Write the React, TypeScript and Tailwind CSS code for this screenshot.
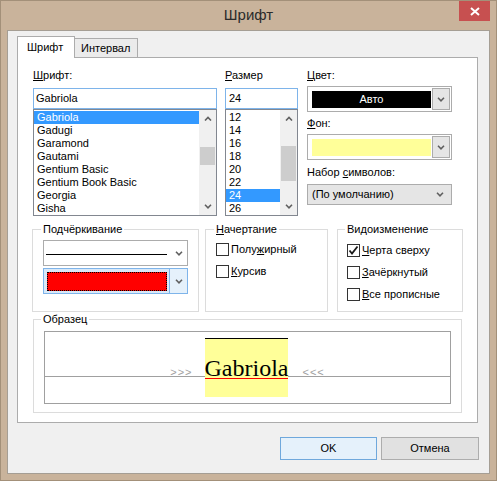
import React from "react";

const fonts = ["Gabriola", "Gadugi", "Garamond", "Gautami", "Gentium Basic", "Gentium Book Basic", "Georgia", "Gisha"];
const sizes = ["12", "14", "16", "18", "20", "22", "24", "26"];

const Chevron = ({ up = false }: { up?: boolean }) => (
  <svg width="8" height="5" viewBox="0 0 8 5">
    <polyline
      points={up ? "1,4.5 4,1.5 7,4.5" : "1,0.8 4,3.8 7,0.8"}
      fill="none"
      stroke="#606060"
      strokeWidth="1.6"
    />
  </svg>
);

const Scrollbar = ({ thumbTop, thumbHeight }: { thumbTop: string; thumbHeight: string }) => (
  <div className="flex w-[17px] flex-col bg-[#f0f0f0]">
    <div className="flex h-[17px] items-center justify-center">
      <Chevron up />
    </div>
    <div className="flex-1">
      <div className={`mx-px bg-[#cdcdcd] ${thumbTop} ${thumbHeight}`} />
    </div>
    <div className="flex h-[17px] items-center justify-center">
      <Chevron />
    </div>
  </div>
);

const Check = ({ label, checked = false }: { label: React.ReactNode; checked?: boolean }) => (
  <div className="flex h-[13px] items-center gap-[2px]">
    <div className="flex h-[13px] w-[13px] items-center justify-center border border-[#333] bg-white">
      {checked && (
        <svg width="11" height="11" viewBox="0 0 11 11">
          <path d="M1.5 5.5 L4 8.5 L9.5 1.5" fill="none" stroke="#1a1a1a" strokeWidth="1.8" />
        </svg>
      )}
    </div>
    <span className="leading-[13px]">{label}</span>
  </div>
);

const U = ({ children }: { children: React.ReactNode }) => <span className="underline">{children}</span>;

const ColorCombo = ({ swatch, children }: { swatch: string; children?: React.ReactNode }) => (
  <div className="flex h-[26px] items-center border border-[#acacac] bg-white pl-[4px] pr-px">
    <div className={`flex h-[17px] w-[119px] items-center justify-center text-white ${swatch}`}>{children}</div>
    <div className="ml-auto flex h-[22px] w-[18px] items-center justify-center border border-[#acacac] bg-[#e5e5e5]">
      <Chevron />
    </div>
  </div>
);

export default function App() {
  return (
    <div className="flex h-[481px] w-[497px] flex-col border border-[#a39079] bg-[#c9b39b] font-['Liberation_Sans',Arial,sans-serif] text-[11px] text-black">
      <div className="relative flex h-[29px] items-center justify-center text-[15px] text-[#2b2b2b]">
        Шрифт
        <div className="absolute right-[6px] top-0 flex h-[20px] w-[31px] items-center justify-center bg-[#c75050]">
          <svg width="10" height="9" viewBox="0 0 10 9">
            <path d="M1 1 L9 8 M9 1 L1 8" stroke="white" strokeWidth="2" />
          </svg>
        </div>
      </div>

      <div className="mx-[6px] mb-[6px] flex flex-1 flex-col border border-[#a59e94] bg-[#f0f0f0] px-[9px] pt-[5px]">
        <div className="flex h-[21px] items-end">
          <div className="relative z-10 -mb-px flex h-[22px] w-[58px] items-center border border-b-0 border-[#acacac] bg-white pl-[9px]">
            Шрифт
          </div>
          <div className="-ml-px flex h-[19px] w-[64px] items-center border border-b-0 border-[#acacac] bg-[#ebebeb] pl-[6px]">
            Интервал
          </div>
        </div>

        <div className="h-[366px] w-[461px] border border-[#acacac] bg-white pl-[15px] pt-[10px]">
          <div className="flex items-start">
            <div className="flex w-[184px] flex-col">
              <div className="h-[15px] leading-[15px]">
                <U>Ш</U>рифт:
              </div>
              <div className="mt-[5px] flex h-[21px] items-center border border-[#7eb4ea] pl-[2px]">Gabriola</div>
              <div className="flex h-[107px] border border-[#828790]">
                <div className="flex-1 pt-px">
                  {fonts.map((f, i) => (
                    <div
                      key={f}
                      className={`h-[13px] pl-[3px] leading-[13px] ${i === 0 ? "bg-[#3399ff] text-white" : ""}`}
                    >
                      {f}
                    </div>
                  ))}
                </div>
                <Scrollbar thumbTop="mt-[20px]" thumbHeight="h-[18px]" />
              </div>
            </div>

            <div className="ml-[8px] flex w-[73px] flex-col">
              <div className="h-[15px] leading-[15px]">
                <U>Р</U>азмер
              </div>
              <div className="mt-[5px] flex h-[21px] items-center border border-[#7eb4ea] pl-[3px]">24</div>
              <div className="flex h-[107px] border border-[#828790]">
                <div className="flex-1 pt-px">
                  {sizes.map((s) => (
                    <div
                      key={s}
                      className={`h-[13px] pl-[3px] leading-[13px] ${s === "24" ? "bg-[#3399ff] text-white" : ""}`}
                    >
                      {s}
                    </div>
                  ))}
                </div>
                <Scrollbar thumbTop="mt-[19px]" thumbHeight="h-[35px]" />
              </div>
            </div>

            <div className="ml-[9px] flex w-[145px] flex-col">
              <div className="h-[15px] leading-[15px]">
                <U>Ц</U>вет:
              </div>
              <div className="mt-[3px]">
                <ColorCombo swatch="bg-black">Авто</ColorCombo>
              </div>
              <div className="mt-[4px] h-[15px] leading-[15px]">
                <U>Ф</U>он:
              </div>
              <div className="mt-[3px]">
                <ColorCombo swatch="bg-[#ffff99]" />
              </div>
              <div className="mt-[5px] h-[15px] leading-[15px]">
                Набор <U>с</U>имволов:
              </div>
              <div className="mt-[4px] flex h-[21px] items-center justify-between border border-[#acacac] bg-[#e5e5e5] pl-[4px] pr-[7px]">
                <span>(По умолчанию)</span>
                <Chevron />
              </div>
            </div>
          </div>

          <div className="-ml-px mt-[6px] flex items-start">
            <fieldset className="h-[90px] w-[167px] border border-[#dcdcdc]">
              <legend className="ml-[8px] px-[2px] leading-[15px]">Подчёркивание</legend>
              <div className="ml-[10px] mt-[3px] w-[145px]">
                <div className="flex h-[26px] items-center border border-[#acacac] bg-white pl-[2px] pr-[4px]">
                  <div className="mt-[2px] h-px w-[121px] bg-black" />
                  <div className="ml-auto">
                    <Chevron />
                  </div>
                </div>
                <div className="mt-[2px] flex h-[26px] items-center border border-[#7eb4ea] bg-[#d9e8f8] pl-[3px]">
                  <div className="h-[19px] w-[120px] border border-dotted border-black bg-[#ff0000]" />
                  <div className="ml-auto flex h-[24px] w-[18px] items-center justify-center border-l border-[#7eb4ea] bg-[#e5f1fb]">
                    <Chevron />
                  </div>
                </div>
              </div>
            </fieldset>

            <fieldset className="ml-[6px] h-[90px] w-[123px] border border-[#dcdcdc]">
              <legend className="ml-[8px] px-[2px] leading-[15px]">
                <U>Н</U>ачертание
              </legend>
              <div className="mt-[6px] flex flex-col gap-[9px] pl-[10px]">
                <Check
                  label={
                    <>
                      Полу<U>ж</U>ирный
                    </>
                  }
                />
                <Check
                  label={
                    <>
                      <U>К</U>урсив
                    </>
                  }
                />
              </div>
            </fieldset>

            <fieldset className="ml-[9px] h-[90px] w-[126px] border border-[#dcdcdc]">
              <legend className="ml-[7px] px-[2px] leading-[15px]">Видоизменение</legend>
              <div className="mt-[7px] flex flex-col gap-[9px] pl-[9px]">
                <Check
                  checked
                  label={
                    <>
                      <U>Ч</U>ерта сверху
                    </>
                  }
                />
                <Check
                  label={
                    <>
                      <U>З</U>ачёркнутый
                    </>
                  }
                />
                <Check
                  label={
                    <>
                      <U>В</U>се прописные
                    </>
                  }
                />
              </div>
            </fieldset>
          </div>

          <fieldset className="h-[101px] w-[429px] border border-[#dcdcdc]">
            <legend className="ml-[7px] px-[2px] leading-[15px]">Образец</legend>
            <div className="relative ml-[10px] mt-[4px] h-[73px] w-[407px] border border-[#a0a0a0] bg-white">
              <div className="absolute left-0 right-0 top-[44px] h-px bg-[#a0a0a0]" />
              <div className="relative flex items-start justify-center pt-[6px]">
                <span className="mr-[12px] mt-[28px] leading-[13px] tracking-[1px] text-[#a0a0a0]">&gt;&gt;&gt;</span>
                <div className="flex h-[59px] flex-col border-t border-black bg-[#ffff99]">
                  <div className="flex h-[40px] items-end border-b border-[#ff0000] font-['Liberation_Serif',serif] text-[24px] leading-[20px]">
                    Gabriola
                  </div>
                </div>
                <span className="ml-[14px] mt-[28px] leading-[13px] tracking-[1px] text-[#a0a0a0]">&lt;&lt;&lt;</span>
              </div>
            </div>
          </fieldset>
        </div>

        <div className="mr-px mt-[14px] flex justify-end gap-[4px]">
          <div className="flex h-[23px] w-[97px] items-center justify-center border border-[#6fa8dc] bg-[#e5f1fb]">OK</div>
          <div className="flex h-[23px] w-[98px] items-center justify-center border border-[#adadad] bg-[#e1e1e1]">
            Отмена
          </div>
        </div>
      </div>
    </div>
  );
}
